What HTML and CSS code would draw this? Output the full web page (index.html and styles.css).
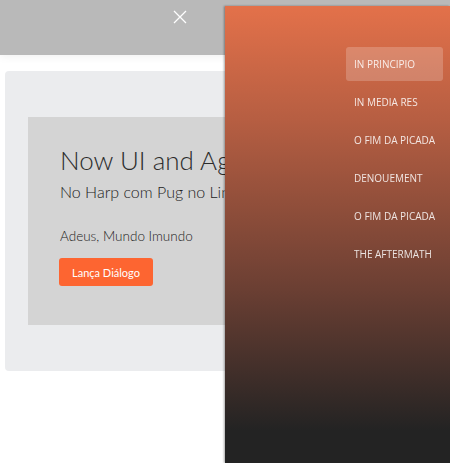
FILE: index.html
```html
<!DOCTYPE html>
<html>
<head>
<meta charset="utf-8">
<link rel="stylesheet" href="styles.css">
</head>
<body>
<header class="topbar">
  <button class="close" aria-label="Fechar">
    <svg width="16" height="16" viewBox="0 0 16 16"><path d="M2 2L14 14M14 2L2 14" stroke="#fff" stroke-width="1.3" fill="none"/></svg>
  </button>
</header>
<main class="page">
  <section class="card">
    <div class="panel">
      <h1 class="title">Now UI and Agora</h1>
      <h2 class="subtitle">No Harp com Pug no Linux</h2>
      <p class="text">Adeus, Mundo Imundo</p>
      <button class="btn">Lança Diálogo</button>
    </div>
  </section>
</main>
<nav class="sidebar">
  <ul class="menu">
    <li class="item active">In Principio</li>
    <li class="item">In Media Res</li>
    <li class="item">O Fim da Picada</li>
    <li class="item">Denouement</li>
    <li class="item">O Fim da Picada</li>
    <li class="item">The Aftermath</li>
  </ul>
</nav>
</body>
</html>
```
FILE: styles.css
```css
html, body {
  margin: 0;
  padding: 0;
  background: #fff;
  font-family: Lato, "Open Sans", sans-serif;
  overflow: hidden;
  height: 463px;
}
.topbar {
  height: 55px;
  background: #b9b9b9;
  display: flex;
  align-items: flex-start;
  box-shadow: 0 2px 8px rgba(0,0,0,0.06);
}
.close {
  margin: 9px 0 0 172px;
  padding: 0;
  border: 0;
  background: none;
  width: 16px;
  height: 16px;
  display: flex;
}
.page {
  padding: 16px 0 0 5px;
}
.card {
  width: 440px;
  height: 300px;
  background: #ebecee;
  border-radius: 4px;
  padding: 46px 0 0 23px;
  box-sizing: border-box;
}
.panel {
  height: 208px;
  background: #d4d4d4;
  padding: 27px 0 0 32px;
  box-sizing: border-box;
  color: #2c2c2c;
}
.title {
  margin: 0;
  font-size: 26px;
  font-weight: 300;
  line-height: 32px;
  white-space: nowrap;
}
.subtitle {
  margin: 5px 0 0;
  font-size: 16px;
  font-weight: 300;
  line-height: 22px;
  white-space: nowrap;
  color: #222;
}
.text {
  margin: 23px 0 0;
  font-size: 13.5px;
  font-weight: 300;
  line-height: 20px;
  color: #222;
}
.btn {
  margin-top: 12px;
  margin-left: -1px;
  width: 94px;
  height: 28px;
  border: 0;
  border-radius: 3px;
  background: #fd6531;
  color: #fff;
  font-family: Lato, sans-serif;
  font-size: 11px;
  font-weight: 400;
  padding: 0;
}
.sidebar {
  position: fixed;
  left: 225px;
  top: 6px;
  width: 225px;
  bottom: 0;
  background: linear-gradient(180deg, #e3714a 0%, #b65e42 25%, #6b3f33 62%, #232323 93%, #232323 100%);
  box-shadow: -1px 0 2px rgba(0,0,0,0.35);
}
.menu {
  list-style: none;
  margin: 41px 0 0 121px;
  padding: 0;
  width: 97px;
  display: flex;
  flex-direction: column;
  gap: 4px;
}
.item {
  height: 34px;
  line-height: 34px;
  padding-left: 8px;
  border-radius: 3px;
  text-transform: uppercase;
  font-family: "Open Sans", Lato, sans-serif;
  font-size: 10px;
  font-weight: 400;
  color: rgba(255,255,255,0.85);
  white-space: nowrap;
}
.item.active {
  background: rgba(255,255,255,0.2);
}
```
